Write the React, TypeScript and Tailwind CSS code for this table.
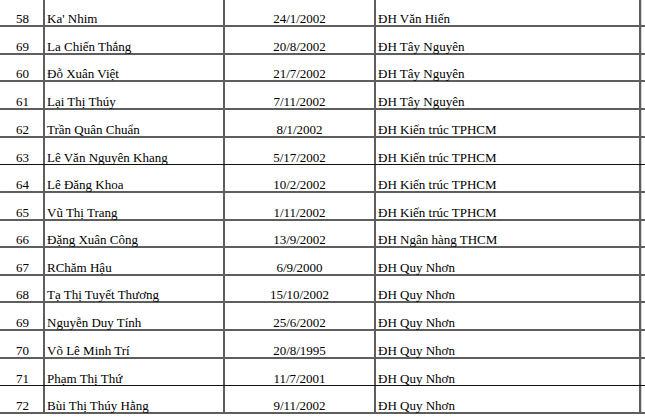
import React from 'react';

type Row = { stt: string; name: string; dob: string; school: string; dark?: boolean };

const rows: Row[] = [
  { stt: '58', name: "Ka' Nhim", dob: '24/1/2002', school: 'ĐH Văn Hiến' },
  { stt: '69', name: 'La Chiến Thắng', dob: '20/8/2002', school: 'ĐH Tây Nguyên' },
  { stt: '60', name: 'Đỗ Xuân Việt', dob: '21/7/2002', school: 'ĐH Tây Nguyên' },
  { stt: '61', name: 'Lại Thị Thúy', dob: '7/11/2002', school: 'ĐH Tây Nguyên' },
  { stt: '62', name: 'Trần Quân Chuẩn', dob: '8/1/2002', school: 'ĐH Kiến trúc TPHCM' },
  { stt: '63', name: 'Lê Văn Nguyên Khang', dob: '5/17/2002', school: 'ĐH Kiến trúc TPHCM', dark: true },
  { stt: '64', name: 'Lê Đăng Khoa', dob: '10/2/2002', school: 'ĐH Kiến trúc TPHCM' },
  { stt: '65', name: 'Vũ Thị Trang', dob: '1/11/2002', school: 'ĐH Kiến trúc TPHCM' },
  { stt: '66', name: 'Đặng Xuân Công', dob: '13/9/2002', school: 'ĐH Ngân hàng THCM' },
  { stt: '67', name: 'RChăm Hậu', dob: '6/9/2000', school: 'ĐH Quy Nhơn' },
  { stt: '68', name: 'Tạ Thị Tuyết Thương', dob: '15/10/2002', school: 'ĐH Quy Nhơn' },
  { stt: '69', name: 'Nguyễn Duy Tính', dob: '25/6/2002', school: 'ĐH Quy Nhơn' },
  { stt: '70', name: 'Võ Lê Minh Trí', dob: '20/8/1995', school: 'ĐH Quy Nhơn' },
  { stt: '71', name: 'Phạm Thị Thứ', dob: '11/7/2001', school: 'ĐH Quy Nhơn', dark: true },
  { stt: '72', name: 'Bùi Thị Thúy Hằng', dob: '9/11/2002', school: 'ĐH Quy Nhơn' },
];

const cell = 'h-full flex items-end border-r-2 border-[#5e5e5e] pb-[1px]';

const App: React.FC = () => {
  return (
    <div
      className="w-[645px] h-[420px] overflow-hidden bg-white text-[13px] leading-[11px] text-black"
      style={{ fontFamily: '"Liberation Serif", "Times New Roman", serif' }}
    >
      <div className="-mt-[0.4px]">
        {rows.map((r, i) => (
          <div
            key={i}
            className={`flex h-[27.64px] ${r.dark ? 'border-b border-[#111]' : 'border-b-2 border-[#5e5e5e]'}`}
          >
            <div className={`${cell} w-[45px] justify-center pl-[2px]`}>{r.stt}</div>
            <div className={`${cell} w-[180px] pl-[2px]`}>{r.name}</div>
            <div className={`${cell} w-[151px] justify-center`}>{r.dob}</div>
            <div className={`${cell} w-[265px] pl-[2px]`}>{r.school}</div>
            <div className="h-full flex-1 border-l border-[#d6d6d6]" />
          </div>
        ))}
      </div>
    </div>
  );
};

export default App;
